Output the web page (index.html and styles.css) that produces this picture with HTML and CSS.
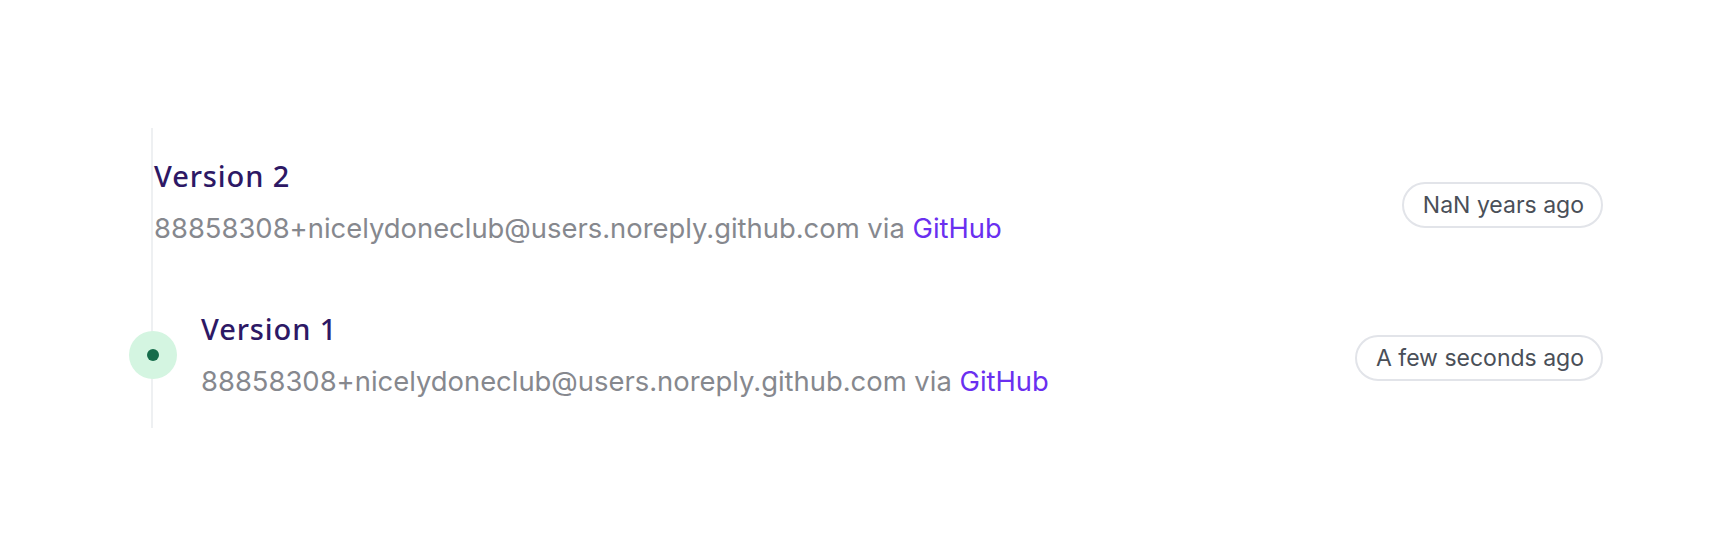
FILE: index.html
```html
<!DOCTYPE html>
<html lang="en">
<head>
<meta charset="utf-8">
<title>Versions</title>
<link rel="stylesheet" href="styles.css">
</head>
<body>
<div class="timeline">
  <div class="item">
    <div class="content">
      <div class="title">Version 2</div>
      <div class="meta">88858308+nicelydoneclub@users.noreply.github.com via <a class="link" href="#">GitHub</a></div>
    </div>
    <span class="badge">NaN years ago</span>
  </div>
  <div class="item item-current">
    <span class="marker"><span class="dot"></span></span>
    <div class="content">
      <div class="title">Version 1</div>
      <div class="meta">88858308+nicelydoneclub@users.noreply.github.com via <a class="link" href="#">GitHub</a></div>
    </div>
    <span class="badge">A few seconds ago</span>
  </div>
</div>
</body>
</html>
```
FILE: styles.css
```css
html, body {
  margin: 0;
  background: #ffffff;
}
body {
  font-family: Inter, "Noto Sans", sans-serif;
}
.timeline {
  margin: 128px 129px 0 151px;
  height: 300px;
  border-left: 2px solid #eef0f2;
  box-sizing: border-box;
  padding-top: 30px;
  display: flex;
  flex-direction: column;
  gap: 65px;
}
.item {
  display: flex;
  align-items: center;
  padding-left: 1px;
}
.item-current {
  margin-left: -25px;
}
.marker {
  width: 48px;
  height: 48px;
  border-radius: 50%;
  background: #d4f5e1;
  display: flex;
  align-items: center;
  justify-content: center;
  margin-right: 24px;
  flex: none;
}
.dot {
  width: 12px;
  height: 12px;
  border-radius: 50%;
  background: #166c4b;
}
.content {
  flex: 1;
  display: flex;
  flex-direction: column;
  gap: 16px;
}
.title {
  font-family: "Noto Sans", Inter, sans-serif;
  font-size: 29px;
  line-height: 36px;
  font-weight: 500;
  color: #2d1865;
  letter-spacing: 0.9px;
}
.meta {
  font-size: 27.4px;
  line-height: 36px;
  color: #86888e;
}
.link {
  color: #6a2ff0;
  text-decoration: none;
}
.badge {
  flex: none;
  margin-top: 6px;
  border: 2px solid #e2e4e9;
  border-radius: 24px;
  height: 46px;
  box-sizing: border-box;
  padding: 0 17px 0 19px;
  display: flex;
  align-items: center;
  font-size: 23px;
  color: #4a4f58;
}
```
